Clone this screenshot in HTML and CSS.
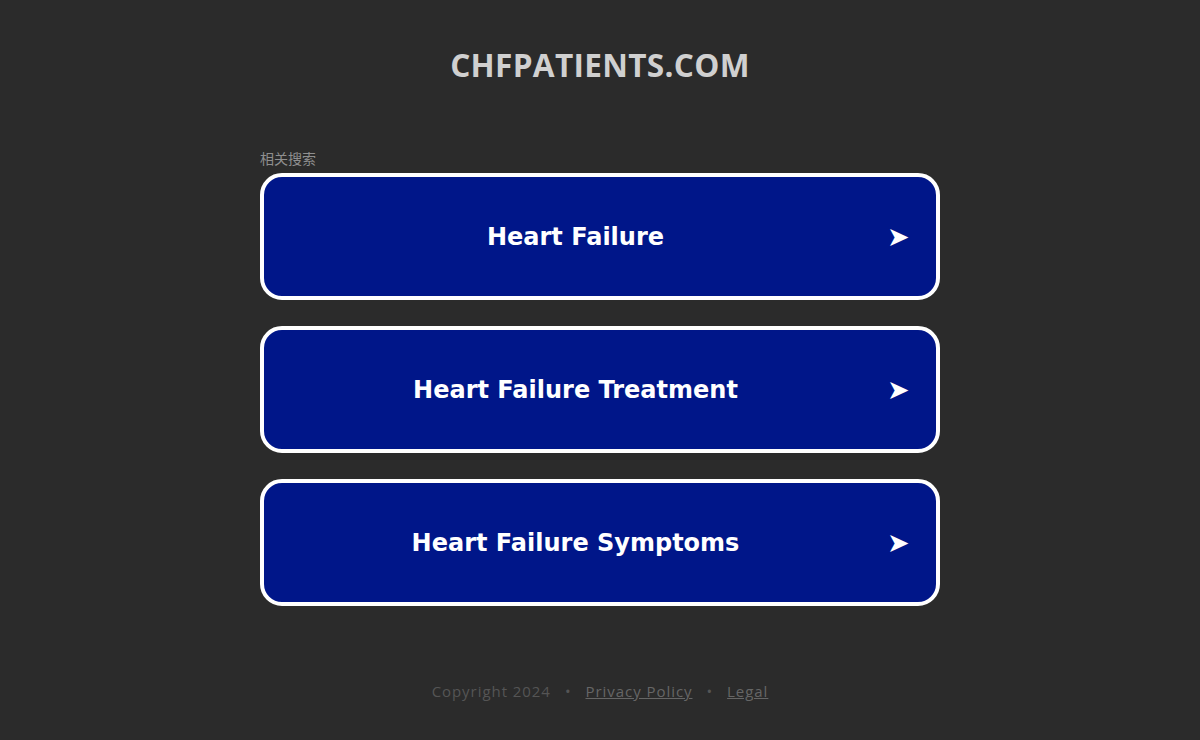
FILE: index.html
```html
<!DOCTYPE html>
<html lang="zh">
<head>
<meta charset="utf-8">
<title>chfpatients.com</title>
<link rel="stylesheet" href="styles.css">
</head>
<body>
<div class="page">
  <h1 class="title">CHFPATIENTS.COM</h1>
  <main class="searches">
    <div class="label">相关搜索</div>
    <a class="btn" href="#"><span class="btn-text">Heart Failure</span><span class="arrow">➤</span></a>
    <a class="btn" href="#"><span class="btn-text">Heart Failure Treatment</span><span class="arrow">➤</span></a>
    <a class="btn" href="#"><span class="btn-text">Heart Failure Symptoms</span><span class="arrow">➤</span></a>
  </main>
  <footer class="footer">
    <span>Copyright 2024</span>
    <span class="dot">•</span>
    <a href="#">Privacy Policy</a>
    <span class="dot">•</span>
    <a href="#">Legal</a>
  </footer>
</div>
</body>
</html>
```
FILE: styles.css
```css
html, body { margin: 0; padding: 0; }
body {
  background: #2b2b2b;
  font-family: "Open Sans", "Noto Sans CJK SC", sans-serif;
  width: 1200px;
  height: 740px;
  overflow: hidden;
}
.page {
  display: flex;
  flex-direction: column;
  align-items: center;
}
.title {
  margin: 43px 0 0;
  font-family: "Open Sans", sans-serif;
  font-weight: 700;
  font-size: 31.6px;
  line-height: 44px;
  color: #d0d0d0;
  letter-spacing: 0.3px;
}
.searches {
  width: 680px;
  margin-top: 61px;
  display: flex;
  flex-direction: column;
  gap: 26px;
}
.label {
  font-family: "Noto Sans CJK SC", sans-serif;
  font-size: 14px;
  line-height: 20px;
  color: #8f8f8f;
  margin-bottom: -21px;
}
.btn {
  box-sizing: border-box;
  height: 127px;
  border: 4px solid #ffffff;
  border-radius: 22px;
  background: #001689;
  display: flex;
  align-items: center;
  text-decoration: none;
  padding: 0 28px 0 0;
}
.btn-text {
  flex: 1;
  text-align: center;
  font-family: "DejaVu Sans", Verdana, sans-serif;
  font-weight: 700;
  font-size: 24px;
  color: #ffffff;
}
.arrow {
  width: 21px;
  text-align: center;
  color: #ffffff;
  font-family: "DejaVu Sans", sans-serif;
  font-size: 27px;
  line-height: 1;
}
.footer {
  margin-top: 75px;
  font-family: "Open Sans", sans-serif;
  font-size: 15px;
  letter-spacing: 0.95px;
  color: #555555;
  display: flex;
  gap: 14px;
}
.footer a { color: #666666; }
.dot { color: #555555; }
```
